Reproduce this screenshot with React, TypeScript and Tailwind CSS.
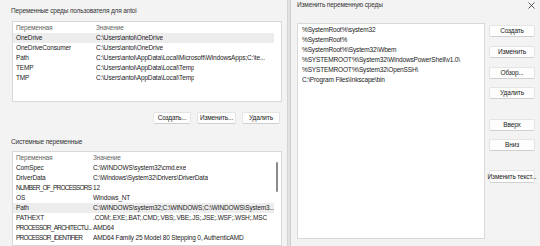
import React from 'react';

const font = { fontFamily: '"Liberation Sans", Arial, sans-serif' };

type Row = [string, string];

const userVars: Row[] = [
    ['OneDrive', 'C:\\Users\\antoi\\OneDrive'],
    ['OneDriveConsumer', 'C:\\Users\\antoi\\OneDrive'],
    ['Path', 'C:\\Users\\antoi\\AppData\\Local\\Microsoft\\WindowsApps;C:\\te...'],
    ['TEMP', 'C:\\Users\\antoi\\AppData\\Local\\Temp'],
    ['TMP', 'C:\\Users\\antoi\\AppData\\Local\\Temp'],
];

const sysVars: Row[] = [
    ['ComSpec', 'C:\\WINDOWS\\system32\\cmd.exe'],
    ['DriverData', 'C:\\Windows\\System32\\Drivers\\DriverData'],
    ['NUMBER_OF_PROCESSORS', '12'],
    ['OS', 'Windows_NT'],
    ['Path', 'C:\\WINDOWS\\system32;C:\\WINDOWS;C:\\WINDOWS\\System3...'],
    ['PATHEXT', '.COM;.EXE;.BAT;.CMD;.VBS;.VBE;.JS;.JSE;.WSF;.WSH;.MSC'],
    ['PROCESSOR_ARCHITECTU...', 'AMD64'],
    ['PROCESSOR_IDENTIFIER', 'AMD64 Family 25 Model 80 Stepping 0, AuthenticAMD'],
];

const pathItems = [
    '%SystemRoot%\\system32',
    '%SystemRoot%',
    '%SystemRoot%\\System32\\Wbem',
    '%SYSTEMROOT%\\System32\\WindowsPowerShell\\v1.0\\',
    '%SYSTEMROOT%\\System32\\OpenSSH\\',
    'C:\\Program Files\\Inkscape\\bin',
];

const VarTable: React.FC<{ rows: Row[]; selected: number; nameW: string; className: string; scroll?: boolean }> = ({ rows, selected, nameW, className, scroll }) => (
    <div className={`relative ml-[1px] w-[270px] bg-white border border-[#d9d9d9] overflow-hidden ${className}`}>
        <div className="flex h-[11px] items-center pl-[3px] text-[#5f5f5f]">
            <div className={`${nameW} shrink-0`}>Переменная</div>
            <div>Значение</div>
        </div>
        {rows.map(([name, value], i) => (
            <div key={name} className={`flex h-[10px] items-center pl-[3px] w-[261px] text-[#1b1b1b] ${i === selected ? 'bg-[#ededed]' : ''}`}>
                <div className={`${nameW} shrink-0 whitespace-nowrap overflow-hidden ${name.length > 12 && name === name.toUpperCase() ? 'tracking-[-0.75px]' : ''}`}>{name}</div>
                <div className="whitespace-nowrap overflow-hidden">{value}</div>
            </div>
        ))}
        {scroll && <div className="absolute right-[3px] top-[10px] w-[2px] h-[30px] rounded-full bg-[#8a8a8a]" />}
    </div>
);

const Btn: React.FC<{ label: string; className?: string }> = ({ label, className = '' }) => (
    <div className={`h-[12px] flex items-center justify-center whitespace-nowrap bg-[#fdfdfd] border border-[#e4e4e4] border-b-[#d0d0d0] rounded-[2px] text-[#1b1b1b] ${className}`}>
        {label}
    </div>
);

export default function App() {
    return (
        <div className="w-[540px] h-[246px] overflow-hidden flex bg-[#f3f3f3] text-[6.5px] leading-[10px] tracking-[-0.15px]" style={font}>
            {/* environment variables window */}
            <div className="w-[288px] shrink-0 flex flex-col pl-[11px] border-r border-[#d4d4d4]">
                <div className="mt-[6px] h-[10px] text-[#333]">Переменные среды пользователя для antoi</div>
                <VarTable rows={userVars} selected={0} nameW="w-[80px]" className="mt-[5px] h-[86px]" />
                <div className="mt-[10px] flex justify-end gap-[6px] pr-[7px]">
                    <Btn label="Создать..." className="w-[38px]" />
                    <Btn label="Изменить..." className="w-[39px]" />
                    <Btn label="Удалить" className="w-[38px]" />
                </div>
                <div className="mt-[13px] h-[10px] text-[#333]">Системные переменные</div>
                <VarTable rows={sysVars} selected={4} nameW="w-[77px]" className="mt-[4px] h-[100px]" scroll />
            </div>
            <div className="w-[3px] shrink-0 bg-[#e2e2e2] border-r border-[#cfcfcf]" />
            {/* edit dialog */}
            <div className="flex-1 flex flex-col pl-[6px]">
                <div className="h-[10px] flex items-center justify-between pr-[5px]">
                    <span className="text-[#333]">Изменить переменную среды</span>
                    <svg width="7" height="7" viewBox="0 0 7 7" className="text-[#333]">
                        <path d="M0.5 0.5L6.5 6.5M6.5 0.5L0.5 6.5" stroke="currentColor" strokeWidth="0.8" />
                    </svg>
                </div>
                <div className="mt-[13px] flex gap-[4px]">
                    <div className="w-[188px] h-[216px] bg-white border border-[#d9d9d9] pt-[1px] pl-[4px] text-[#1b1b1b]">
                        {pathItems.map(p => (
                            <div key={p} className="h-[10px] flex items-center whitespace-nowrap">{p}</div>
                        ))}
                    </div>
                    <div className="w-[46px] flex flex-col">
                        <Btn label="Создать" className="mt-[2px]" />
                        <Btn label="Изменить" className="mt-[9px]" />
                        <Btn label="Обзор..." className="mt-[9px]" />
                        <Btn label="Удалить" className="mt-[8px]" />
                        <Btn label="Вверх" className="mt-[20px]" />
                        <Btn label="Вниз" className="mt-[8px]" />
                        <Btn label="Изменить текст..." className="mt-[19px] h-[13px]" />
                    </div>
                </div>
            </div>
        </div>
    );
}
